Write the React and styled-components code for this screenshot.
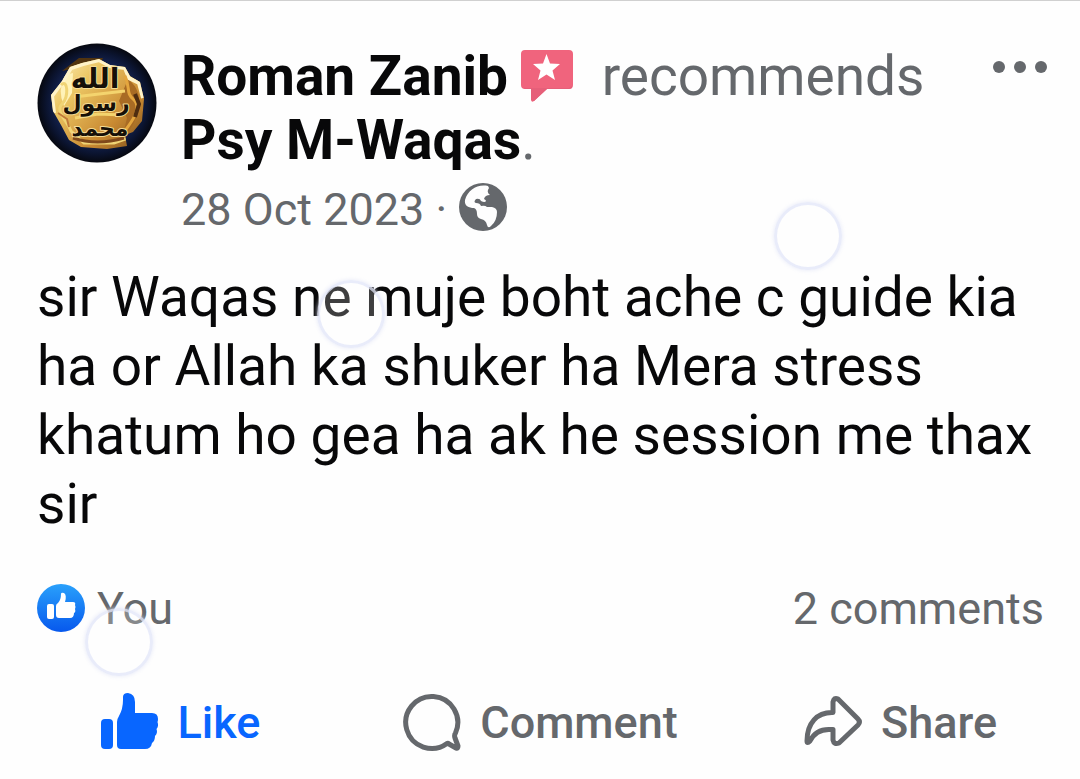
import React from "react";
import styled, { createGlobalStyle } from "styled-components";

const GlobalStyle = createGlobalStyle`
  * { box-sizing: border-box; }
  body {
    margin: 0;
    background: #fefefe;
    color: #080809;
    font-family: Roboto, "Liberation Sans", sans-serif;
  }
`;

const gray = "#65686c";
const blue = "#0866ff";

const Post = styled.article`
  position: relative;
  padding: 42px 36px 24px 37px;
  border-top: 1px solid #d0d0d0;
  overflow: hidden;
`;

const Header = styled.header`
  display: flex;
  align-items: flex-start;
`;

const AvatarLink = styled.a`
  flex: none;
  width: 120px;
  height: 120px;
  margin-right: 24px;
  svg { display: block; }
`;

const Byline = styled.div`
  flex: 1;
  min-width: 0;
  padding-top: 1px;
`;

const Title = styled.h1`
  margin: 0;
  font-size: 55px;
  line-height: 64px;
  font-weight: 400;
  color: ${gray};
`;

const NameLink = styled.a`
  color: #080809;
  font-weight: 700;
  text-decoration: none;
`;

const Badge = styled.svg`
  width: 54px;
  height: 54px;
  margin: 0 14px 0 12px;
  vertical-align: -8px;
`;

const Meta = styled.div`
  display: flex;
  align-items: center;
  gap: 12px;
  height: 64px;
  margin-top: 3px;
  color: ${gray};
  font-size: 45px;
`;

const PostDate = styled.span`
  padding-top: 4px;
`;

const MenuButton = styled.button`
  flex: none;
  margin-right: -4px;
  padding: 16px 0;
  border: 0;
  background: none;
  svg { display: block; }
`;

const Body = styled.p`
  margin: 24px 0 0;
  font-size: 55px;
  line-height: 69px;
`;

const Summary = styled.div`
  display: flex;
  align-items: center;
  justify-content: space-between;
  height: 64px;
  margin-top: 37px;
  color: ${gray};
  font-size: 45px;
`;

const SummaryLink = styled.a`
  display: flex;
  align-items: center;
  gap: 12px;
  color: inherit;
  text-decoration: none;
`;

const Actions = styled.div`
  display: grid;
  grid-template-columns: repeat(3, 1fr);
  margin: 50px -36px 0 -37px;
`;

const ActionButton = styled.button`
  display: flex;
  align-items: center;
  justify-content: center;
  gap: 18px;
  height: 64px;
  padding: 0;
  border: 0;
  background: none;
  color: ${(p) => (p.$active ? blue : gray)};
  font-family: inherit;
  font-size: 45px;
  font-weight: 500;
  svg { flex: none; }
`;

const Bubble = styled.span`
  position: absolute;
  left: ${(p) => p.$left}px;
  top: ${(p) => p.$top}px;
  width: 68px;
  height: 68px;
  border: 3px solid rgba(226, 230, 248, 0.75);
  border-radius: 50%;
  background: rgba(255, 255, 255, 0.22);
  box-shadow: 0 0 4px rgba(222, 226, 246, 0.8);
  pointer-events: none;
`;

const Avatar = () => (
  <svg width="120" height="120" viewBox="0 0 120 120" role="img" aria-label="Roman Zanib">
    <defs>
      <radialGradient id="night">
        <stop offset="0.6" stopColor="#17285c" />
        <stop offset="0.85" stopColor="#0b1430" />
        <stop offset="1" stopColor="#060810" />
      </radialGradient>
      <linearGradient id="gold" x1="0" y1="0" x2="1" y2="1">
        <stop offset="0.1" stopColor="#fff6cf" />
        <stop offset="0.35" stopColor="#ecc764" />
        <stop offset="0.65" stopColor="#c98a32" />
        <stop offset="1" stopColor="#5d3510" />
      </linearGradient>
      <clipPath id="seal">
        <path d="M33 24 45 20 62 16 73 22 88 24 93 33 103 39 107 56 105 78 96 89 88 92 90 103 70 106 44 104 32 97 24 82 16 68 14 52 25 38Z" />
      </clipPath>
    </defs>
    <circle cx="60" cy="60" r="59.500" fill="url(#night)" />
    <path d="M25 28 42 15 66 15 63 21 35 26Z" fill="#51340f" />
    <g clipPath="url(#seal)">
      <rect width="120" height="120" fill="url(#gold)" />
      <path d="M91 36Q106 48 101 68T86 92L90 75 82 58Z" fill="#a86b24" />
      <path d="M28 32Q20 48 27 63L35 50 36 30Z" fill="#fff2b8" />
      <g fill="none" strokeWidth="3">
        <path d="M17 70 15 53 26 38 34 25 46 21 62 17 73 23 88 25 92 35 102 40 106 55" stroke="#fff3c8" strokeWidth="4" />
        <path d="M24 42C31 35 32 54 25 61S29 76 34 88L47 100 77 100 91 95" stroke="#f0d475" />
        <path d="M88 33C94 46 88 49 97 57S93 81 87 89" stroke="#e4a63e" />
        <path d="M98 51 102 61 98 74" stroke="#4f2d10" strokeWidth="4" />
        <path d="M21 70 30 76 32 84" stroke="#c07a3a" strokeWidth="2" />
        <path d="M36 95Q60 103 87 95" stroke="#7f481b" />
        <path d="M37 54 62 51 88 48M38 75 61 71 86 72" stroke="#f4d46e" />
      </g>
    </g>
    <g
      fill="#161008"
      stroke="#f6dc94"
      strokeWidth="2"
      paintOrder="stroke"
      strokeLinejoin="round"
      fontFamily="'DejaVu Sans', sans-serif"
      fontWeight="700"
      textAnchor="middle"
    >
      <text x="58" y="45" fontSize="28">الله</text>
      <text x="59" y="68" fontSize="22">رسول</text>
      <text x="63" y="93" fontSize="22">محمد</text>
    </g>
  </svg>
);

const StarBadge = () => (
  <Badge viewBox="0 0 54 54" aria-hidden="true">
    <path d="M5 1H49Q53 1 53 5V36Q53 40 49 40H27L14 52Q11 54 11 50V40H5Q1 40 1 36V5Q1 1 5 1Z" fill="#f0647d" />
    <path d="M2 37Q3 39 6 39H49L52 37V39L49 40H27L14 52 11 51V40H5Z" fill="#e65f79" />
    <path d="M26.500 5 30 14.500 40 15 32.500 21.500 35 31 26.500 25.500 18 31 20.500 21.500 13 15 23 14.500Z" fill="#fff" />
  </Badge>
);

const Globe = () => (
  <svg width="48" height="48" viewBox="0 0 48 48" role="img" aria-label="Public">
    <circle cx="24" cy="24" r="24" fill={gray} />
    <path d="M29 3C18 1 9 7 6 17C5 23 10 25 15 25Q18 26 18 31Q18 35 22 36Q27 37 28 42Q29 46 32 43Q38 38 38 29Q38 25 33 24L28 24Q26 22 22 23Q21 20 17 20Q14 19 17 16Q21 15 22 18Q26 20 27 18Q27 17 25 16Q26 12 31 12Q27 9 30 5Z" fill="#fefefe" />
  </svg>
);

const Reaction = () => (
  <svg width="48" height="48" viewBox="0 0 48 48" aria-hidden="true">
    <defs>
      <linearGradient id="reaction" x1="0" y1="0" x2="0" y2="1">
        <stop offset="0" stopColor="#29a0fb" />
        <stop offset="1" stopColor="#0758ed" />
      </linearGradient>
    </defs>
    <circle cx="24" cy="24" r="24" fill="url(#reaction)" />
    <g fill="#fff">
      <rect x="10" y="20" width="7" height="15" rx="2" />
      <path d="M19 22Q19 20 21 19Q24 16 24 10Q24 8 27 9Q30 11 28 18H36Q39 18 38 21Q39 23 38 25Q39 28 37 29Q37 34 33 34H22Q19 34 19 31Z" />
    </g>
  </svg>
);

const LikeIcon = () => (
  <svg width="60" height="60" viewBox="0 0 60 60" fill="currentColor" aria-hidden="true">
    <rect x="1" y="27" width="12" height="30" rx="4" />
    <path d="M17 30Q17 27 19 24Q23 17 23 8V5Q23 1 28 1Q35 2 35 10V21H52Q58 21 58 27Q58 29 57.500 30Q59 34 56.500 37Q58 41 55 44Q55 49 52 51Q51 57 45 57H21Q17 57 17 53Z" />
  </svg>
);

const CommentIcon = () => (
  <svg width="60" height="60" viewBox="0 0 60 60" fill="none" stroke="currentColor" strokeWidth="5" strokeLinejoin="round" aria-hidden="true">
    <path d="M45 51.500A26 26 0 1 1 53.500 41Q52 43 53 46L56 54Q56 57 54 56L47 52Q46 51 45 51.500Z" />
  </svg>
);

const ShareIcon = () => (
  <svg width="60" height="60" viewBox="0 0 60 60" fill="none" stroke="currentColor" strokeWidth="5" strokeLinejoin="round" strokeLinecap="round" aria-hidden="true">
    <path d="M30 20.500V10Q31 5 35 7L55 27Q58 30 55 33L36 51Q31 53 30 48V37.500H27C15 37 10 43 7 49Q4 52 4 49C4 31 14 20 30 20.500Z" />
  </svg>
);

export default function App() {
  return (
    <>
      <GlobalStyle />
      <Post>
        <Header>
          <AvatarLink href="#profile"><Avatar /></AvatarLink>
          <Byline>
            <Title>
              <NameLink href="#profile">Roman Zanib</NameLink>
              <StarBadge /> recommends <NameLink href="#page">Psy M-Waqas</NameLink>.
            </Title>
            <Meta>
              <PostDate>28 Oct 2023 ·</PostDate>
              <Globe />
            </Meta>
          </Byline>
          <MenuButton type="button" aria-label="More options">
            <svg width="56" height="16" viewBox="0 0 56 16" fill={gray} aria-hidden="true">
              <circle cx="7" cy="8" r="6" />
              <circle cx="28" cy="8" r="6" />
              <circle cx="49" cy="8" r="6" />
            </svg>
          </MenuButton>
        </Header>
        <Body>
          sir Waqas ne muje boht ache c guide kia ha or Allah ka shuker ha Mera
          stress khatum ho gea ha ak he session me thax sir
        </Body>
        <Summary>
          <SummaryLink href="#reactions"><Reaction />You</SummaryLink>
          <SummaryLink href="#comments">2 comments</SummaryLink>
        </Summary>
        <Actions>
          <ActionButton type="button" aria-pressed="true" $active><LikeIcon />Like</ActionButton>
          <ActionButton type="button"><CommentIcon />Comment</ActionButton>
          <ActionButton type="button"><ShareIcon />Share</ActionButton>
        </Actions>
        <Bubble $left={774} $top={201} />
        <Bubble $left={317} $top={279} />
        <Bubble $left={85} $top={607} />
      </Post>
    </>
  );
}
